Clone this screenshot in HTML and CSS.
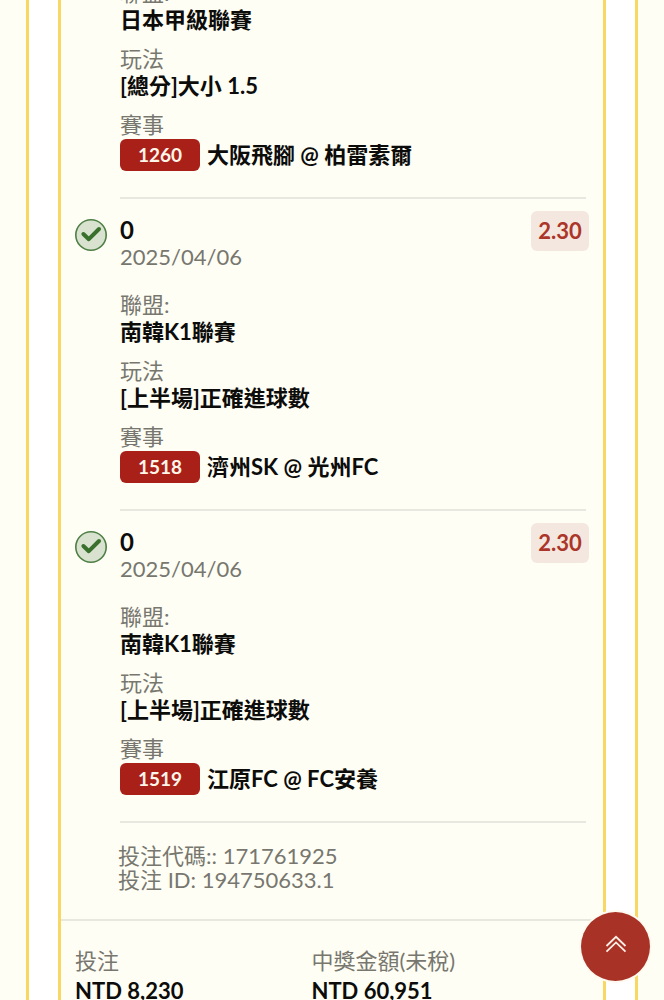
FILE: index.html
```html
<!DOCTYPE html>
<html lang="zh-Hant">
<head>
    <meta charset="UTF-8">
    <meta name="viewport" content="width=device-width, initial-scale=1.0">
    <title>投注紀錄</title>
    <link rel="stylesheet" href="styles.css">
</head>
<body>
    <main class="history">
        <article class="slip">
            <section class="leg">
                <div class="leg-body">
                    <dl class="fields">
                        <dt>聯盟:</dt>
                        <dd>日本甲級聯賽</dd>
                        <dt>玩法</dt>
                        <dd>[總分]大小 1.5</dd>
                        <dt>賽事</dt>
                        <dd class="match"><span class="code">1260</span>大阪飛腳 @ 柏雷素爾</dd>
                    </dl>
                </div>
            </section>
            <section class="leg">
                <svg class="status" viewBox="0 0 32 32" role="img" aria-label="贏">
                    <circle cx="16" cy="16" r="15.2"/>
                    <path d="M8.4 15 L13.8 20.2 L24 10"/>
                </svg>
                <div class="leg-body">
                    <header class="leg-head">
                        <div>
                            <h2>0</h2>
                            <time datetime="2025-04-06">2025/04/06</time>
                        </div>
                        <span class="odds">2.30</span>
                    </header>
                    <dl class="fields">
                        <dt>聯盟:</dt>
                        <dd>南韓K1聯賽</dd>
                        <dt>玩法</dt>
                        <dd>[上半場]正確進球數</dd>
                        <dt>賽事</dt>
                        <dd class="match"><span class="code">1518</span>濟州SK @ 光州FC</dd>
                    </dl>
                </div>
            </section>
            <section class="leg">
                <svg class="status" viewBox="0 0 32 32" role="img" aria-label="贏">
                    <circle cx="16" cy="16" r="15.2"/>
                    <path d="M8.4 15 L13.8 20.2 L24 10"/>
                </svg>
                <div class="leg-body">
                    <header class="leg-head">
                        <div>
                            <h2>0</h2>
                            <time datetime="2025-04-06">2025/04/06</time>
                        </div>
                        <span class="odds">2.30</span>
                    </header>
                    <dl class="fields">
                        <dt>聯盟:</dt>
                        <dd>南韓K1聯賽</dd>
                        <dt>玩法</dt>
                        <dd>[上半場]正確進球數</dd>
                        <dt>賽事</dt>
                        <dd class="match"><span class="code">1519</span>江原FC @ FC安養</dd>
                    </dl>
                </div>
            </section>
            <div class="ids">
                <p>投注代碼:: 171761925</p>
                <p>投注 ID: 194750633.1</p>
            </div>
            <dl class="totals">
                <div>
                    <dt>投注</dt>
                    <dd>NTD 8,230</dd>
                </div>
                <div>
                    <dt>中獎金額(未稅)</dt>
                    <dd>NTD 60,951</dd>
                </div>
            </dl>
        </article>
    </main>
    <button type="button" class="to-top" aria-label="回到頂部" onclick="window.scrollTo(0,0);">
        <svg viewBox="0 0 22 18">
            <path d="M1.5 11 L11 1.8 L20.5 11"/>
            <path d="M1.5 16.6 L11 7.4 L20.5 16.6"/>
        </svg>
    </button>
</body>
</html>
```
FILE: styles.css
```css
*{
    padding:0;
    margin:0;
    box-sizing:border-box;
}
body{
    height:100vh;
    overflow:hidden;
    background-color:#fffef4;
    color:#0c0c0a;
    font-family:Lato, "Noto Sans CJK TC", sans-serif;
    font-size:22px;
    line-height:27px;
}
.history{
    margin:0 26px;
    padding:0 29px;
    background-color:white;
    border:solid #f8d862;
    border-width:0 3px;
}
.slip{
    padding-bottom:24px;
    background-color:#fffef4;
    border:solid #f8d862;
    border-width:0 3px;
}

/* one selection of the parlay */
.leg{
    display:flex;
    gap:13px;
    padding:0 17px 0 14px;
}
.leg:first-child{
    margin-top:-21px;
    padding-left:59px;
}
.status{
    flex:none;
    width:32px;
    height:32px;
    margin-top:20px;
}
.status circle{
    fill:#d9e2cf;
    stroke:#4d7f45;
    stroke-width:1.6;
}
.status path{
    fill:none;
    stroke:#38702c;
    stroke-width:4;
    stroke-linecap:round;
    stroke-linejoin:round;
}
.leg-body{
    flex-grow:1;
    padding-bottom:26px;
    border-bottom:2px solid #e9e8e0;
}
.leg-head{
    display:flex;
    justify-content:space-between;
    align-items:flex-start;
    padding-top:18px;
    margin-bottom:21px;
}
.leg-head h2{
    font-size:24px;
    font-weight:700;
    line-height:26px;
}
time{
    display:block;
    color:#777770;
}
.odds{
    width:58px;
    margin:-6px -3px 0 0;
    border-radius:6px;
    background-color:#f4e7e0;
    color:#ab3529;
    font-weight:700;
    line-height:40px;
    text-align:center;
}
dt{
    color:#777770;
}
dd{
    font-weight:700;
}
.fields dd + dt{
    margin-top:12px;
}
.match{
    display:flex;
    gap:7px;
    padding-top:1px;
    line-height:32px;
}
.code{
    width:80px;
    border-radius:6px;
    background-color:#a92018;
    color:#fff6ea;
    font-size:19px;
    font-weight:700;
    text-align:center;
}

.ids{
    padding:21px 14px 27px 57px;
    border-bottom:2px solid #e9e8e0;
    color:#777770;
    line-height:24px;
}
.totals{
    display:grid;
    grid-template-columns:46% 54%;
    padding:26px 14px 0;
}
.totals dd{
    line-height:33px;
}

.to-top{
    position:fixed;
    right:14px;
    bottom:19px;
    width:69px;
    height:69px;
    border:none;
    border-radius:50%;
    background-color:#a93226;
    box-shadow:0 0 0 2px #fffaf0;
    cursor:pointer;
}
.to-top svg{
    display:block;
    width:22px;
    height:18px;
    margin:-6px auto 0;
    fill:none;
    stroke:#fff0e6;
    stroke-width:1.8;
}
```
